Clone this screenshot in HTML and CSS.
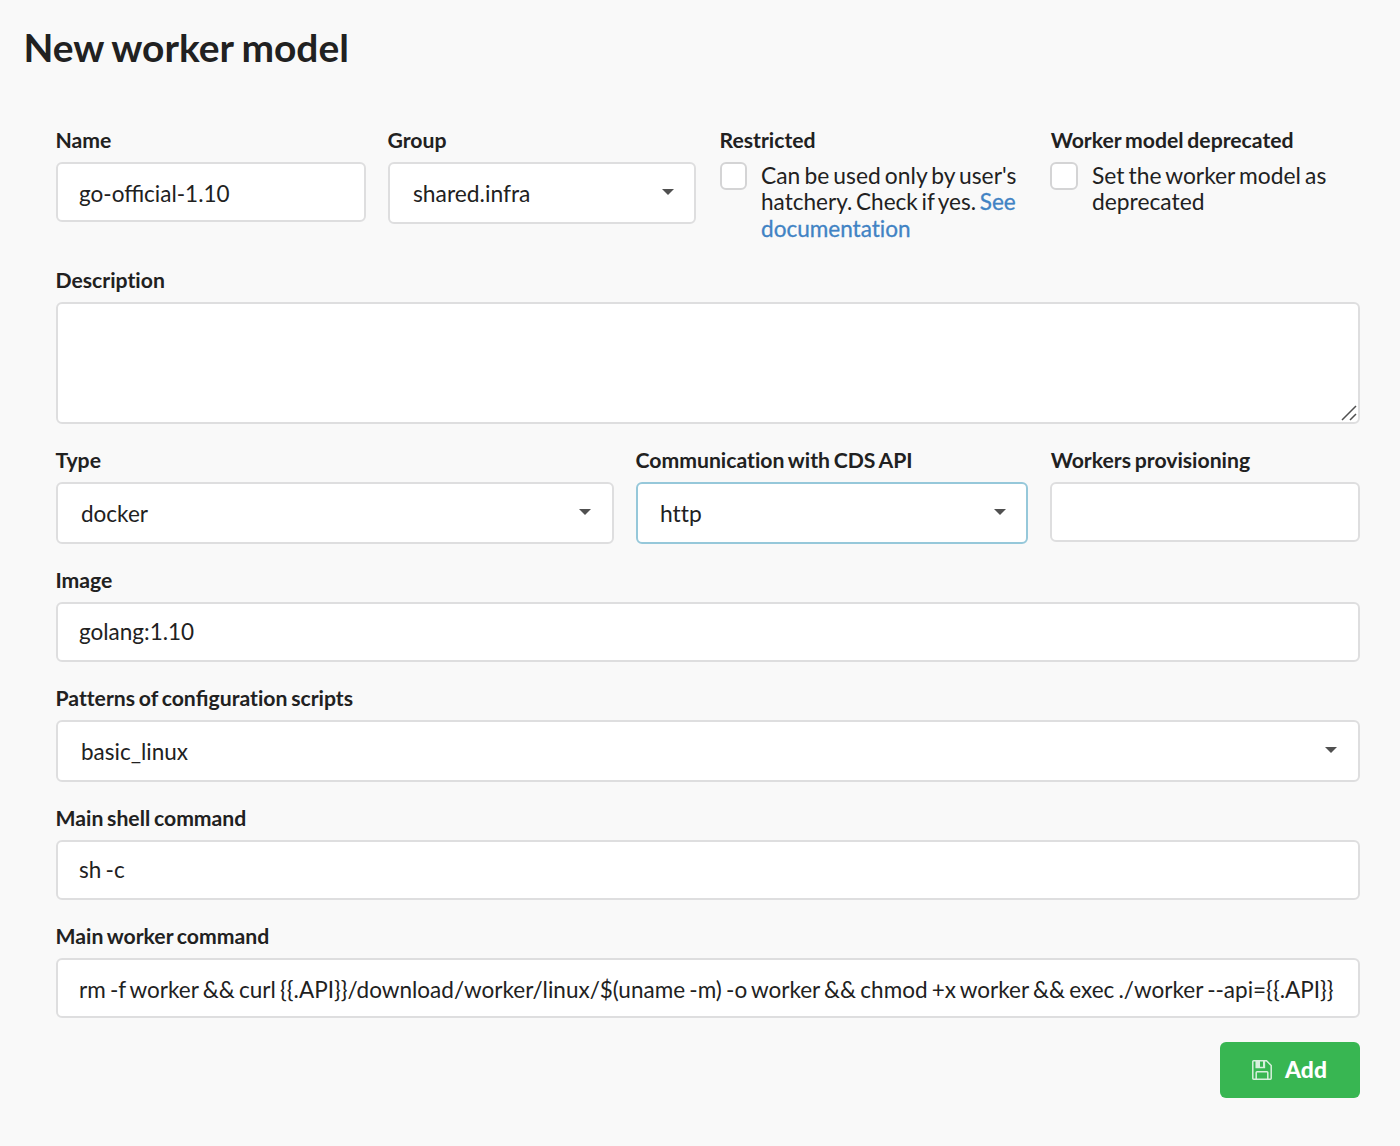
FILE: index.html
```html
<!DOCTYPE html>
<html lang="en">
<head>
<meta charset="utf-8">
<title>New worker model</title>
<link rel="stylesheet" href="styles.css">
</head>
<body>
<h1 class="title">New worker model</h1>
<form class="form">
  <div class="fields four">
    <div class="field"><label class="label">Name</label><div class="input"><span class="lig">go-official-1.10</span></div></div>
    <div class="field"><label class="label">Group</label><div class="input select narrow"><span class="wide">shared.infra</span><i class="caret"></i></div></div>
    <div class="field"><label class="label">Restricted</label>
      <div class="check"><i class="box slim"></i><p class="hint">Can be used only by user's<br><span class="tight">hatchery. Check if yes. <a class="link">See<br>documentation</a></span></p></div>
    </div>
    <div class="field"><label class="label nudged">Worker model deprecated</label>
      <div class="check"><i class="box"></i><p class="hint">Set the worker model as<br>deprecated</p></div>
    </div>
  </div>
  <div class="field"><label class="label">Description</label>
    <div class="input area"><svg class="grip" width="16" height="16" viewBox="0 0 16 16"><path d="M1 15L15 1M9 15L15 9"/></svg></div>
  </div>
  <div class="fields three">
    <div class="field"><label class="label">Type</label><div class="input select"><span>docker</span><i class="caret"></i></div></div>
    <div class="field"><label class="label">Communication with CDS API</label><div class="input select active"><span class="wide">http</span><i class="caret"></i></div></div>
    <div class="field"><label class="label nudged">Workers provisioning</label><div class="input"></div></div>
  </div>
  <div class="field"><label class="label">Image</label><div class="input raised"><span>golang:1.10</span></div></div>
  <div class="field"><label class="label">Patterns of con<span class="lig">fi</span>guration scripts</label><div class="input select"><span>basic_linux</span><i class="caret"></i></div></div>
  <div class="field"><label class="label">Main shell command</label><div class="input raised"><span>sh -c</span></div></div>
  <div class="field"><label class="label">Main worker command</label><div class="input"><span>rm -f worker &amp;&amp; curl {{.API}}/download/worker/linux/$(uname -m) -o worker &amp;&amp; chmod +x worker &amp;&amp; exec ./worker --api={{.API}}</span></div></div>
  <button class="button" type="button">
    <svg class="save" width="20" height="20" viewBox="0 0 20 20"><path class="line" d="M1.7 .8H14.5L19.2 5.5V18.3Q19.2 19.2 18.3 19.2H1.7Q.8 19.2 .8 18.3V1.7Q.8 .8 1.7 .8ZM4.2 19V12.6Q4.2 11.8 5 11.8H15Q15.8 11.8 15.8 12.6V19M4.2 1V7.6H12.4V1"/><path class="fill" d="M4 1H8V7.5H4ZM11 1H13V7.5H11Z"/></svg>
    <span class="caption">Add</span>
  </button>
</form>
</body>
</html>
```
FILE: styles.css
```css
* { box-sizing: border-box; }
body {
  margin: 0;
  background: #f9f9f9;
  color: #212121;
  font-family: Lato, sans-serif;
  font-size: 22.5px;
  word-spacing: -1.5px;
  font-variant-ligatures: none;
}
.lig { font-variant-ligatures: normal; }
.wide { font-size: 22.8px; }
.title { margin: 0; padding: 22px 24px 0 23.5px; height: 128px; font-size: 38.9px; line-height: 50px; font-weight: 700; word-spacing: -1.2px; }
.form { display: flex; flex-direction: column; gap: 24px; padding: 0 40px 0 56px; }
.fields { display: grid; column-gap: 22px; }
.four { grid-template-columns: 310px 310px 308px 1fr; height: 116px; }
.three { grid-template-columns: 558px 392px 1fr; }
.field { display: flex; flex-direction: column; }
.label { height: 24px; margin: 0 0 10px -.5px; line-height: 24px; font-size: 21.2px; font-weight: 700; white-space: nowrap; word-spacing: -1.4px; }
.nudged { margin-left: .7px; }
.input {
  display: flex;
  align-items: center;
  height: 60px;
  padding: 2px 21px 0;
  border: 2px solid #dededf;
  border-radius: 6px;
  background: #fff;
  white-space: nowrap;
}
.raised { padding-top: 0; padding-bottom: 2px; }
.select { height: 62px; padding: 0 21px 0 23px; justify-content: space-between; }
.narrow { width: 308px; padding-right: 20px; }
.active { border-color: #96c8da; padding-left: 22px; padding-right: 20px; }
.caret { width: 12px; height: 6px; margin-top: -2px; background: #505050; clip-path: polygon(0 0, 100% 0, 50% 100%); }
.area { height: 122px; align-items: flex-end; justify-content: flex-end; padding: 0 1px 1px 0; }
.grip { fill: none; stroke: #505050; stroke-width: 1.5; }
.check { display: flex; gap: 14px; }
.box { flex: none; width: 28px; height: 28px; border: 2px solid #d4d4d5; border-radius: 6px; background: #fff; }
.slim { width: 27px; }
.hint { margin: 0; font-size: 22.8px; line-height: 26px; white-space: nowrap; word-spacing: -1.7px; }
.tight { font-size: 22.55px; word-spacing: -2px; }
.link { color: #4183c4; -webkit-text-stroke: .3px #4183c4; }
.button {
  display: flex;
  align-items: center;
  justify-content: center;
  gap: 13px;
  align-self: flex-end;
  width: 140px;
  height: 56px;
  padding: 0 1px 0 0;
  border: 0;
  border-radius: 6px;
  background: #38b652;
  color: #fff;
  font: 900 22.8px Lato, sans-serif;
}
.caption { padding-bottom: 2px; }
.save { opacity: .8; }
.line { fill: none; stroke: #fff; stroke-width: 1.5; }
.fill { fill: #fff; }
```
